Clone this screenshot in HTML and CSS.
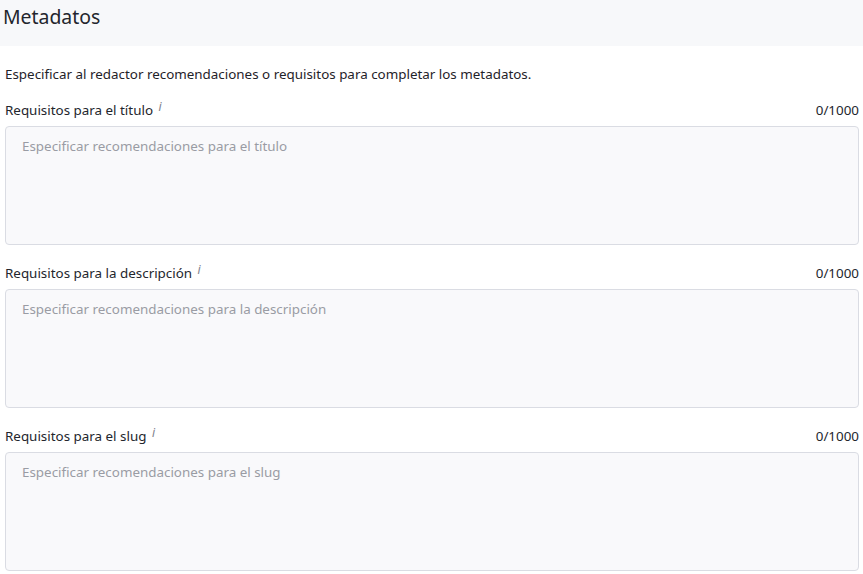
FILE: index.html
```html
<!DOCTYPE html>
<html lang="es">
<head>
<meta charset="utf-8">
<link rel="stylesheet" href="styles.css">
</head>
<body>
<div class="header"><h1 class="title">Metadatos</h1></div>
<div class="content">
  <p class="desc">Especificar al redactor recomendaciones o requisitos para completar los metadatos.</p>
  <div class="field">
    <div class="label-row">
      <span class="label">Requisitos para el título <i class="info">i</i></span>
      <span class="counter">0/1000</span>
    </div>
    <textarea class="input" placeholder="Especificar recomendaciones para el título"></textarea>
  </div>
  <div class="field">
    <div class="label-row">
      <span class="label">Requisitos para la descripción <i class="info">i</i></span>
      <span class="counter">0/1000</span>
    </div>
    <textarea class="input" placeholder="Especificar recomendaciones para la descripción"></textarea>
  </div>
  <div class="field">
    <div class="label-row">
      <span class="label">Requisitos para el slug <i class="info">i</i></span>
      <span class="counter">0/1000</span>
    </div>
    <textarea class="input" placeholder="Especificar recomendaciones para el slug"></textarea>
  </div>
</div>
</body>
</html>
```
FILE: styles.css
```css
* { box-sizing: border-box; }
html, body { margin: 0; padding: 0; background: #ffffff; }
body {
  font-family: "Noto Sans", sans-serif;
  color: #1f2229;
  width: 863px;
  height: 574px;
  overflow: hidden;
}
.header {
  height: 46px;
  background: #f7f8fa;
  padding: 4px 0 0 3px;
}
.title {
  margin: 0;
  font-size: 19.4px;
  font-weight: 400;
  line-height: 26px;
  color: #23262d;
}
.content {
  padding: 0 4px 0 5px;
}
.desc {
  margin: 19px 0 13px 0;
  font-size: 13.4px;
  line-height: 18px;
}
.field {
  display: flex;
  flex-direction: column;
}
.field + .field { margin-top: 14px; }
.label-row {
  display: flex;
  justify-content: space-between;
  align-items: center;
  height: 28px;
  margin-bottom: 2px;
  font-size: 13.4px;
}
.label { color: #23262d; }
.info {
  font-family: "Noto Sans", sans-serif;
  font-style: italic;
  font-size: 12px;
  color: #7d808a;
  position: relative;
  top: -4px;
  margin-left: 2px;
}
.counter { color: #23262d; }
.input {
  display: block;
  width: 100%;
  height: 119px;
  resize: none;
  border: 1.5px solid #dadce3;
  border-radius: 4px;
  background: #f9f9fb;
  padding: 10px 16px;
  font-family: "Noto Sans", sans-serif;
  font-size: 13.4px;
  line-height: 18px;
  color: #23262d;
  outline: none;
}
.input::placeholder { color: #9a9ca4; opacity: 1; }
```
